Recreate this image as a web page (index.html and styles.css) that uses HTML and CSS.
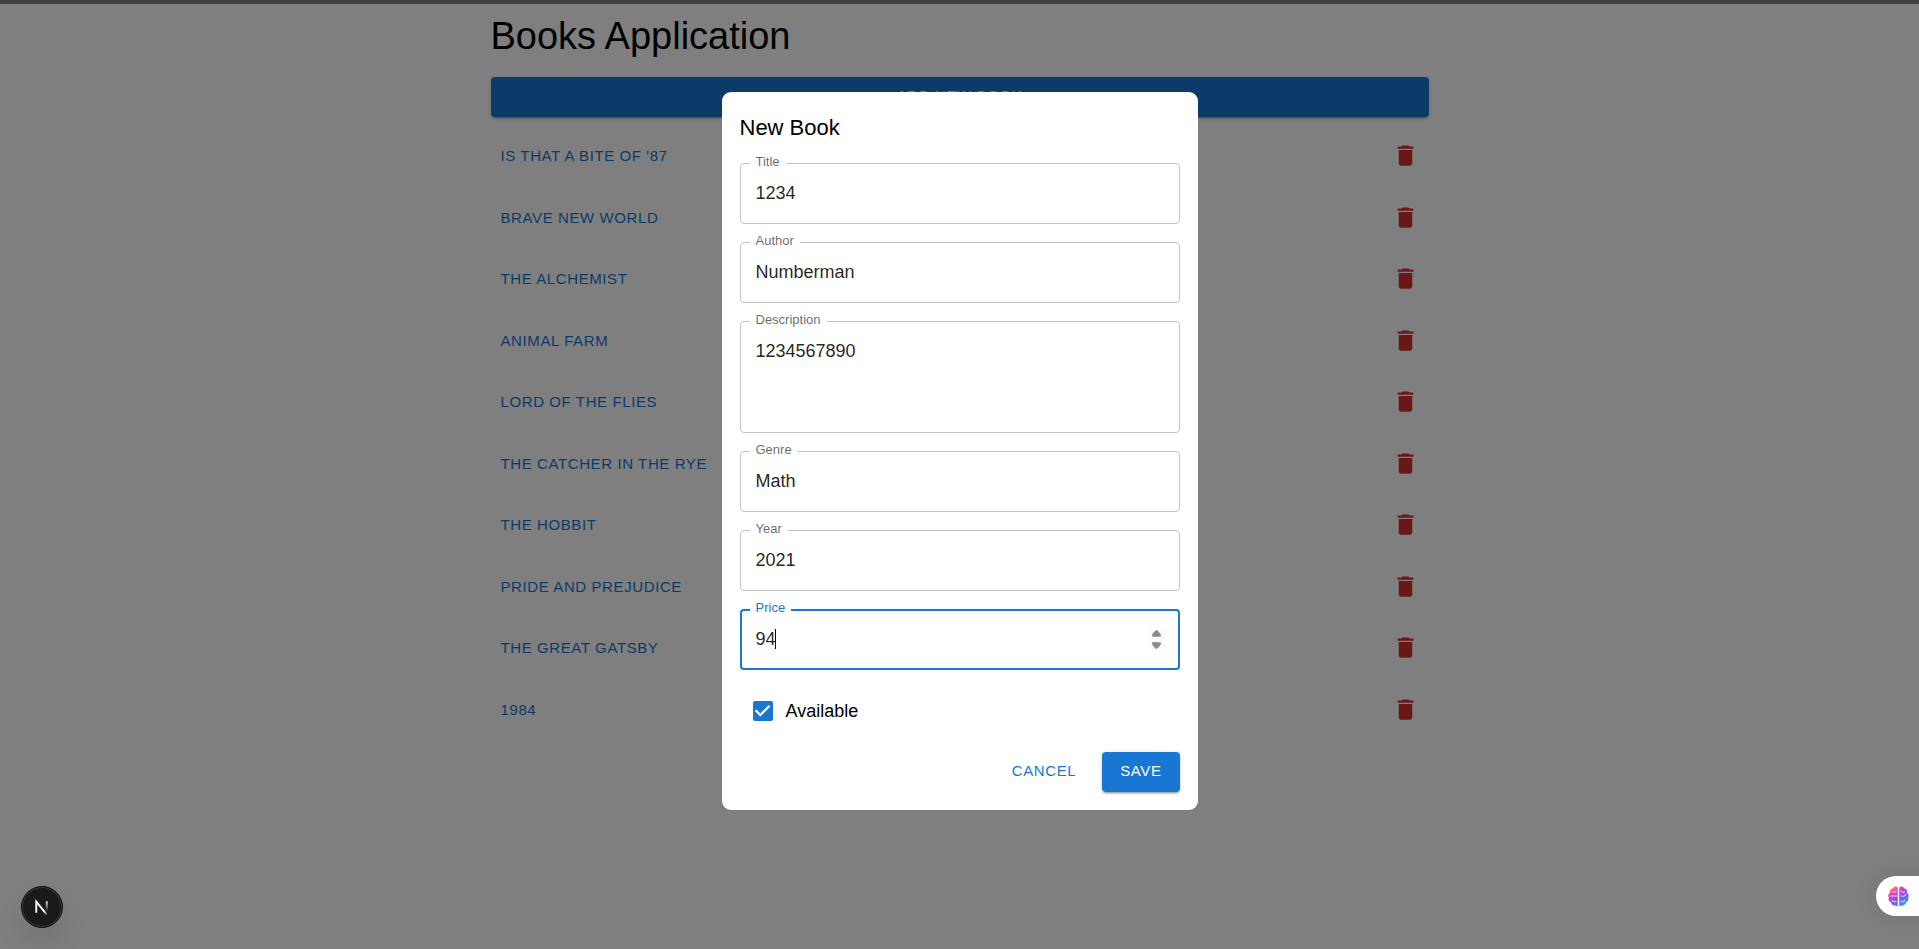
FILE: index.html
```html
<!DOCTYPE html>
<html lang="en">
<head>
<meta charset="utf-8">
<meta name="viewport" content="width=device-width, initial-scale=1">
<title>Books Application</title>
<link rel="stylesheet" href="styles.css">
</head>
<body>
<svg class="sprite" aria-hidden="true">
  <symbol id="trash" viewBox="0 0 24 24"><path d="M6 19c0 1.100.9 2 2 2h8c1.100 0 2-.9 2-2V7H6zM19 4h-3.500l-1-1h-5l-1 1H5v2h14z"/></symbol>
</svg>

<main class="container">
  <h1 class="page-title">Books Application</h1>
  <button class="btn btn-filled btn-wide" type="button">Add new book</button>
  <ul class="books">
    <li class="book"><a class="book-link" href="#">Is that a bite of '87</a><button class="icon-btn" type="button" aria-label="Delete"><svg><use href="#trash"/></svg></button></li>
    <li class="book"><a class="book-link" href="#">Brave New World</a><button class="icon-btn" type="button" aria-label="Delete"><svg><use href="#trash"/></svg></button></li>
    <li class="book"><a class="book-link" href="#">The Alchemist</a><button class="icon-btn" type="button" aria-label="Delete"><svg><use href="#trash"/></svg></button></li>
    <li class="book"><a class="book-link" href="#">Animal Farm</a><button class="icon-btn" type="button" aria-label="Delete"><svg><use href="#trash"/></svg></button></li>
    <li class="book"><a class="book-link" href="#">Lord of the Flies</a><button class="icon-btn" type="button" aria-label="Delete"><svg><use href="#trash"/></svg></button></li>
    <li class="book"><a class="book-link" href="#">The Catcher in the Rye</a><button class="icon-btn" type="button" aria-label="Delete"><svg><use href="#trash"/></svg></button></li>
    <li class="book"><a class="book-link" href="#">The Hobbit</a><button class="icon-btn" type="button" aria-label="Delete"><svg><use href="#trash"/></svg></button></li>
    <li class="book"><a class="book-link" href="#">Pride and Prejudice</a><button class="icon-btn" type="button" aria-label="Delete"><svg><use href="#trash"/></svg></button></li>
    <li class="book"><a class="book-link" href="#">The Great Gatsby</a><button class="icon-btn" type="button" aria-label="Delete"><svg><use href="#trash"/></svg></button></li>
    <li class="book"><a class="book-link" href="#">1984</a><button class="icon-btn" type="button" aria-label="Delete"><svg><use href="#trash"/></svg></button></li>
  </ul>
</main>

<div class="backdrop">
  <form class="modal" role="dialog" aria-modal="true" aria-labelledby="modal-title">
    <h2 class="modal-title" id="modal-title">New Book</h2>
    <div class="field"><input class="control" id="title" type="text" value="1234"><label class="label" for="title">Title</label></div>
    <div class="field"><input class="control" id="author" type="text" value="Numberman"><label class="label" for="author">Author</label></div>
    <div class="field"><textarea class="control" id="description" rows="3">1234567890</textarea><label class="label" for="description">Description</label></div>
    <div class="field"><input class="control" id="genre" type="text" value="Math"><label class="label" for="genre">Genre</label></div>
    <div class="field"><input class="control" id="year" type="number" value="2021"><label class="label" for="year">Year</label></div>
    <div class="field field-active">
      <input class="control" id="price" type="number" value="94"><label class="label" for="price">Price</label>
      <span class="caret"></span>
      <svg class="spinner" viewBox="0 0 17 20" aria-hidden="true"><path d="M8.500 1C9.200 1 13 5 13 6.500c0 .8-.5 1.300-1.300 1.300H5.300C4.500 7.800 4 7.300 4 6.500 4 5 7.800 1 8.500 1zM8.500 20c.7 0 4.500-4 4.500-5.500 0-.8-.5-1.300-1.300-1.300H5.300c-.8 0-1.300.5-1.300 1.300C4 16 7.800 20 8.500 20z"/></svg>
    </div>
    <label class="check"><input class="check-box" type="checkbox" checked>Available</label>
    <div class="actions">
      <button class="btn btn-text" type="button">Cancel</button>
      <button class="btn btn-filled" type="button">Save</button>
    </div>
  </form>
</div>

<button class="dev-badge" type="button" aria-label="Open developer tools">
  <svg viewBox="0 0 42 42" fill="none">
    <defs>
      <linearGradient id="fade-v" x1="26" y1="14" x2="26" y2="26" gradientUnits="userSpaceOnUse"><stop stop-color="#fff"/><stop offset="1" stop-color="#fff" stop-opacity="0"/></linearGradient>
      <linearGradient id="fade-d" x1="19" y1="19" x2="27" y2="29" gradientUnits="userSpaceOnUse"><stop stop-color="#fff"/><stop offset=".6" stop-color="#fff"/><stop offset="1" stop-color="#fff" stop-opacity=".2"/></linearGradient>
    </defs>
    <path d="M15 27V15.500L26 29" stroke="url(#fade-d)" stroke-width="2"/>
    <path d="M26 15h1v11h-2V15z" fill="url(#fade-v)"/>
  </svg>
</button>

<button class="brain-tab" type="button" aria-label="Open assistant">
  <svg viewBox="0 0 20 20" fill="none">
    <defs>
      <linearGradient id="brain" x1="3" y1="0" x2="16" y2="20" gradientUnits="userSpaceOnUse"><stop stop-color="#ffa52e"/><stop offset=".25" stop-color="#f83cb4"/><stop offset=".55" stop-color="#8a4df5"/><stop offset="1" stop-color="#22a7f5"/></linearGradient>
    </defs>
    <path fill="url(#brain)" d="M9.300 1.500C8 0 5.200.3 4.700 2.200 2.500 2.500 1.400 4.600 2.100 6.200.3 7.300-.2 9.500.8 11c-.7 2 .2 4 2 4.500.2 2.200 2.200 3.400 4 3 1 1 2 .9 2.500.2zM10.700 1.500C12 0 14.800.3 15.300 2.200c2.200.3 3.300 2.400 2.600 4 1.800 1.100 2.300 3.300 1.300 4.800.7 2-.2 4-2 4.500-.2 2.200-2.200 3.400-4 3-1 1-2 .9-2.500.2z"/>
    <path stroke="#fff" stroke-opacity=".75" stroke-linecap="round" d="M2.500 9.500h6M4.500 5.500c1.300.8 2.400.5 3.200-.7M4 13.500c.8 1.700 2.500 1.800 3.500 1M12.500 4.800c.8 1.200 1.900 1.500 3.200.7M12.500 9.500c2.500.8 4-.2 4.500-2M12.500 14.500c1 .8 2.700.7 3.500-1"/>
  </svg>
</button>
</body>
</html>
```
FILE: styles.css
```css
* {
  box-sizing: border-box;
}

body {
  margin: 0;
  border-top: 4px solid #808080;
  background: #fff;
  color: #000;
  font: 18px/25px "Liberation Sans", Arial, sans-serif;
}

button,
input,
textarea {
  font: inherit;
}

.sprite {
  display: none;
}

.container {
  max-width: 938px;
  margin: 0 auto;
  padding-top: 9px;
}

.page-title {
  margin: 0 0 18px;
  font-size: 38px;
  font-weight: 400;
  line-height: 46px;
}

.btn {
  border: 0;
  border-radius: 4px;
  padding: 6px 18px 8px;
  font-size: 15px;
  line-height: 26px;
  letter-spacing: 0.04em;
  text-transform: uppercase;
  cursor: pointer;
}

.btn-filled {
  background: #1976d2;
  color: #fff;
  box-shadow: 0 3px 1px -2px rgba(0, 0, 0, 0.2), 0 2px 2px rgba(0, 0, 0, 0.14), 0 1px 5px rgba(0, 0, 0, 0.12);
}

.btn-text {
  padding: 6px 8px 8px;
  background: none;
  color: #1976d2;
}

.btn-wide {
  display: block;
  width: 100%;
}

.books {
  display: grid;
  min-height: 615px;
  margin: 8px 0 0;
  padding: 0;
  list-style: none;
}

.book {
  display: flex;
  align-items: center;
  justify-content: space-between;
}

.book-link {
  padding: 7px 10px;
  color: #1976d2;
  font-size: 15px;
  letter-spacing: 0.04em;
  text-decoration: none;
  text-transform: uppercase;
}

.icon-btn {
  display: flex;
  border: 0;
  padding: 9px 10px;
  background: none;
  color: #d32f2f;
  cursor: pointer;
}

.icon-btn svg {
  width: 27px;
  height: 27px;
  fill: currentColor;
}

.backdrop {
  position: fixed;
  inset: 0;
  display: flex;
  align-items: flex-start;
  justify-content: center;
  padding: 92px 16px 16px;
  background: rgba(0, 0, 0, 0.5);
}

.modal {
  display: flex;
  flex-direction: column;
  gap: 18px;
  width: 476px;
  border-radius: 9px;
  padding: 18px;
  background: #fff;
}

.modal-title {
  margin: 0;
  font-size: 22px;
  font-weight: 400;
  line-height: 35px;
}

.field {
  position: relative;
  display: flex;
}

.control {
  width: 100%;
  border: 1px solid #c4c4c4;
  border-radius: 4px;
  padding: 17px 15px;
  outline: 0;
  background: none;
  color: rgba(0, 0, 0, 0.87);
  line-height: 25px;
  resize: none;
}

input.control {
  height: 61px;
}

textarea.control {
  height: 112px;
}

.label {
  position: absolute;
  top: -9px;
  left: 10px;
  padding: 0 6px;
  background: #fff;
  color: rgba(0, 0, 0, 0.6);
  font-size: 13px;
  line-height: 16px;
}

.field-active .control {
  border: 2px solid #1976d2;
  padding: 16px 14px;
}

.field-active .label {
  color: #1976d2;
}

.control::-webkit-inner-spin-button {
  appearance: none;
}

.caret {
  position: absolute;
  top: 20px;
  left: 35px;
  width: 1px;
  height: 20px;
  background: #000;
}

.spinner {
  position: absolute;
  top: 20px;
  right: 15px;
  width: 17px;
  height: 20px;
  background: #fafafa;
  fill: #8b8b8b;
  pointer-events: none;
}

.check {
  display: flex;
  align-items: center;
  gap: 13px;
  padding: 10px 13px;
  line-height: 26px;
}

.check-box {
  appearance: none;
  width: 20px;
  height: 20px;
  margin: 0;
  border-radius: 2px;
  background: #1976d2;
}

.check-box:checked::before {
  content: "";
  display: block;
  height: 100%;
  background: #fff;
  clip-path: polygon(39% 78%, 11% 50%, 19% 42%, 39% 62%, 81% 20%, 89% 28%);
}

.actions {
  display: flex;
  justify-content: flex-end;
  gap: 18px;
}

.dev-badge {
  position: fixed;
  bottom: 21px;
  left: 21px;
  display: flex;
  width: 42px;
  height: 42px;
  border: 1px solid #111;
  border-radius: 50%;
  padding: 0;
  background: #1a1a1a;
  box-shadow: inset 0 0 0 1px #3c3c3c, 0 16px 32px -8px rgba(0, 0, 0, 0.24);
}

.dev-badge svg {
  width: 100%;
}

.brain-tab {
  position: fixed;
  right: 0;
  bottom: 33px;
  display: flex;
  align-items: center;
  width: 43px;
  height: 40px;
  border: 0;
  border-radius: 20px 0 0 20px;
  padding: 0 10px 0 12px;
  background: #fff;
  box-shadow: 0 0 24px rgba(0, 0, 0, 0.1);
}

.brain-tab svg {
  width: 21px;
  height: 21px;
}
```
